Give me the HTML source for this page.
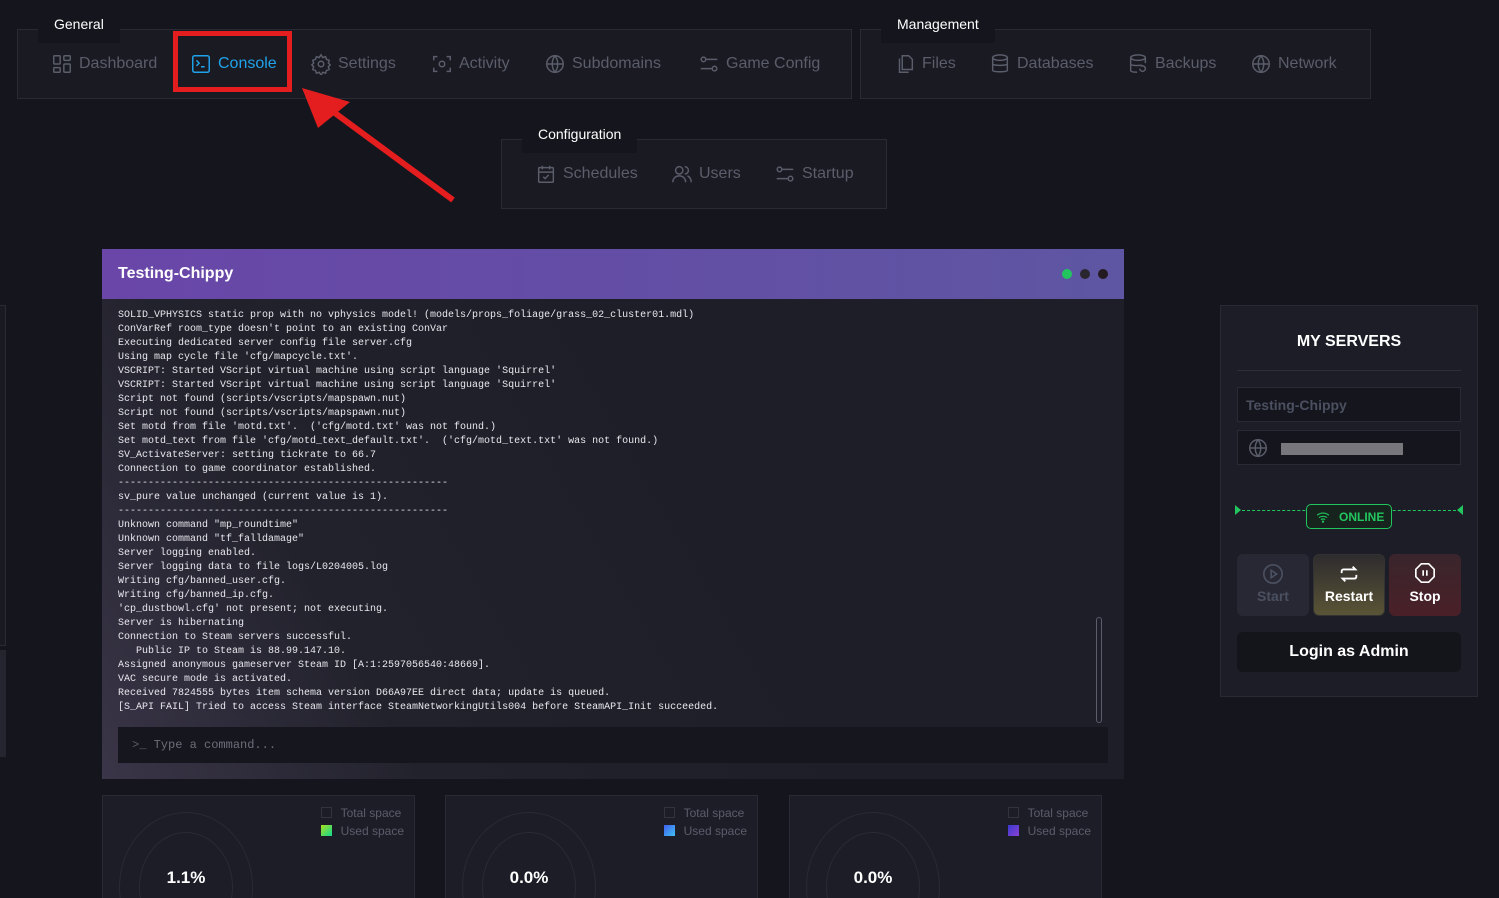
<!DOCTYPE html>
<html style="overflow:hidden;width:1499px;height:898px"><head><meta charset="utf-8"><style>
*{box-sizing:border-box;margin:0;padding:0}
body{width:1499px;height:898px;overflow:hidden;background:#15151d;font-family:"Liberation Sans",sans-serif;position:relative;color:#fff}
.grp{position:absolute;border:1px solid #2a2a35;background:#1a1a23}
.lbl{position:absolute;background:#15151d;color:#fff;font-size:14px;padding:0 16px;height:30px;line-height:22px}
.it{position:absolute;top:0;height:100%;display:flex;align-items:center;color:#5a5d6a;font-size:16px;gap:6px}
.it svg{width:22px;height:22px;fill:none;stroke:#5a5d6a;stroke-width:1.6}
.con{position:absolute;left:102px;top:249px;width:1022px;height:530px}
.hdr{height:50px;background:linear-gradient(90deg,#6946a8,#5e56a2);font-weight:bold;font-size:16px;padding:16px 16px}
.body{height:480px;background:linear-gradient(60deg,#3a3548 0%,#22222c 25%,#1e1e28 60%);position:relative}
pre{position:absolute;left:16px;top:10px;font-family:"Liberation Mono",monospace;font-size:10px;line-height:14px;color:#e8e8ee}
.card{position:absolute;top:795px;width:313px;height:103px;border:1px solid #2a2a35;border-bottom:none;background:#1d1d27;overflow:hidden}
.card .c1{position:absolute;left:16px;top:16px;width:134px;height:150px;border:1px solid #2a2a35;border-radius:50%}
.card .c2{position:absolute;left:36px;top:36px;width:94px;height:110px;border:1px solid #2a2a35;border-radius:50%}
.card .pct{position:absolute;left:16px;width:134px;top:72px;text-align:center;font-weight:bold;font-size:17px}
.leg{position:absolute;right:10px;top:8px;font-size:12px;color:#5a5d6a;line-height:18px}
.leg span{display:inline-block;width:11px;height:11px;border:1px solid #333340;vertical-align:-1px;margin-right:9px}
</style></head><body>

<div class="grp" style="left:17px;top:29px;width:835px;height:70px">
 <div class="it" style="left:33px"><svg viewBox="0 0 24 24"><rect x="3" y="3" width="7" height="9" rx="1"/><rect x="14" y="3" width="7" height="5" rx="1"/><rect x="14" y="12" width="7" height="9" rx="1"/><rect x="3" y="16" width="7" height="5" rx="1"/></svg>Dashboard</div>
 <div class="it" style="left:172px;color:#1fa3ea"><svg viewBox="0 0 24 24" style="stroke:#1fa3ea"><rect x="3" y="3" width="18" height="18" rx="2"/><path d="M7 8l3 3-3 3M12 15h4"/></svg>Console</div>
 <div class="it" style="left:292px"><svg viewBox="0 0 24 24"><circle cx="12" cy="12" r="3"/><path d="M12 2l2 3 3-1 1 3 3 1-1 3 2 2-2 2 1 3-3 1-1 3-3-1-2 3-2-3-3 1-1-3-3-1 1-3-2-2 2-2-1-3 3-1 1-3 3 1z"/></svg>Settings</div>
 <div class="it" style="left:413px"><svg viewBox="0 0 24 24"><path d="M3 8V4h4M17 4h4v4M21 16v4h-4M7 20H3v-4"/><circle cx="12" cy="12" r="3"/></svg>Activity</div>
 <div class="it" style="left:526px"><svg viewBox="0 0 24 24"><circle cx="12" cy="12" r="9"/><path d="M3 12h18M12 3c-4 5-4 13 0 18M12 3c4 5 4 13 0 18"/></svg>Subdomains</div>
 <div class="it" style="left:680px"><svg viewBox="0 0 24 24"><circle cx="6" cy="7" r="2.5"/><path d="M9 7h12M3 17h12"/><circle cx="18" cy="17" r="2.5"/></svg>Game Config</div>
</div>
<div class="lbl" style="left:38px;top:13px">General</div>
<div style="position:absolute;left:173px;top:31px;width:119px;height:61px;border:5px solid #e41e1e"></div>
<svg style="position:absolute;left:290px;top:80px" width="180" height="130"><path d="M163 120L30 22" stroke="#e41e1e" stroke-width="6"/><path d="M12 8L60 22 28 48z" fill="#e41e1e"/></svg>

<div class="grp" style="left:860px;top:29px;width:511px;height:70px">
 <div class="it" style="left:33px"><svg viewBox="0 0 24 24"><path d="M9 3h7l4 4v11H9z"/><path d="M6 6v15h10"/></svg>Files</div>
 <div class="it" style="left:128px"><svg viewBox="0 0 24 24"><ellipse cx="12" cy="5" rx="8" ry="3"/><path d="M4 5v14c0 2 16 2 16 0V5M4 12c0 2 16 2 16 0"/></svg>Databases</div>
 <div class="it" style="left:266px"><svg viewBox="0 0 24 24"><ellipse cx="12" cy="5" rx="8" ry="3"/><path d="M4 5v14c0 2 6 2 7 2M20 5v6M4 12c0 2 10 2 12 1"/><path d="M14 17a3 3 0 1 0 3-3h-2"/></svg>Backups</div>
 <div class="it" style="left:389px"><svg viewBox="0 0 24 24"><circle cx="12" cy="12" r="9"/><path d="M3 12h18M12 3c-4 5-4 13 0 18M12 3c4 5 4 13 0 18"/></svg>Network</div>
</div>
<div class="lbl" style="left:881px;top:13px">Management</div>

<div class="grp" style="left:501px;top:139px;width:386px;height:70px">
 <div class="it" style="left:33px"><svg viewBox="0 0 24 24"><rect x="4" y="5" width="16" height="16" rx="1"/><path d="M4 10h16M8 3v4M16 3v4M9 15l2 2 4-4"/></svg>Schedules</div>
 <div class="it" style="left:169px"><svg viewBox="0 0 24 24"><circle cx="9" cy="8" r="4"/><path d="M2 21c0-4 3-7 7-7s7 3 7 7M15 4a4 4 0 0 1 0 8M18 14c2 1 4 3 4 7"/></svg>Users</div>
 <div class="it" style="left:272px"><svg viewBox="0 0 24 24"><circle cx="6" cy="7" r="2.5"/><path d="M9 7h12M3 17h12"/><circle cx="18" cy="17" r="2.5"/></svg>Startup</div>
</div>
<div class="lbl" style="left:522px;top:123px">Configuration</div>

<div style="position:absolute;left:0;top:305px;width:6px;height:341px;border:1px solid #2a2a35;border-left:none;background:#1a1a23"></div>
<div style="position:absolute;left:0;top:650px;width:6px;height:107px;background:#25252f"></div>

<div class="con">
 <div class="hdr">Testing-Chippy
  <div style="position:absolute;right:16px;top:20px;display:flex;gap:8px"><i style="width:10px;height:10px;border-radius:50%;background:#22c55e"></i><i style="width:10px;height:10px;border-radius:50%;background:#2a2630"></i><i style="width:10px;height:10px;border-radius:50%;background:#241a22"></i></div>
 </div>
 <div class="body">
<pre>SOLID_VPHYSICS static prop with no vphysics model! (models/props_foliage/grass_02_cluster01.mdl)
ConVarRef room_type doesn't point to an existing ConVar
Executing dedicated server config file server.cfg
Using map cycle file 'cfg/mapcycle.txt'.
VSCRIPT: Started VScript virtual machine using script language 'Squirrel'
VSCRIPT: Started VScript virtual machine using script language 'Squirrel'
Script not found (scripts/vscripts/mapspawn.nut)
Script not found (scripts/vscripts/mapspawn.nut)
Set motd from file 'motd.txt'.  ('cfg/motd.txt' was not found.)
Set motd_text from file 'cfg/motd_text_default.txt'.  ('cfg/motd_text.txt' was not found.)
SV_ActivateServer: setting tickrate to 66.7
Connection to game coordinator established.
-------------------------------------------------------
sv_pure value unchanged (current value is 1).
-------------------------------------------------------
Unknown command "mp_roundtime"
Unknown command "tf_falldamage"
Server logging enabled.
Server logging data to file logs/L0204005.log
Writing cfg/banned_user.cfg.
Writing cfg/banned_ip.cfg.
'cp_dustbowl.cfg' not present; not executing.
Server is hibernating
Connection to Steam servers successful.
   Public IP to Steam is 88.99.147.10.
Assigned anonymous gameserver Steam ID [A:1:2597056540:48669].
VAC secure mode is activated.
Received 7824555 bytes item schema version D66A97EE direct data; update is queued.
[S_API FAIL] Tried to access Steam interface SteamNetworkingUtils004 before SteamAPI_Init succeeded.</pre>
  <div style="position:absolute;left:994px;top:318px;width:6px;height:106px;border:1px solid #5a5d6a;border-radius:3px"></div>
  <div style="position:absolute;left:16px;top:428px;width:990px;height:36px;background:#16161e;font-family:'Liberation Mono',monospace;font-size:12px;color:#6b6e7a;padding:11px 14px"><span style="color:#5a5d6a">&gt;_</span> Type a command...</div>
 </div>
</div>

<div style="position:absolute;left:1220px;top:305px;width:258px;height:392px;border:1px solid #2a2a35;background:#1d1d27">
 <div style="text-align:center;font-weight:bold;font-size:16px;margin-top:27px">MY SERVERS</div>
 <div style="position:absolute;left:16px;top:64px;width:224px;border-top:1px solid #2e2e3a"></div>
 <div style="position:absolute;left:16px;top:81px;width:224px;height:35px;border:1px solid #2a2a35;background:#15151d;color:#4b5060;font-weight:bold;font-size:14px;padding:9px 8px">Testing-Chippy</div>
 <div style="position:absolute;left:16px;top:124px;width:224px;height:35px;border:1px solid #2a2a35;background:#15151d">
  <svg style="position:absolute;left:9px;top:6px" width="22" height="22" viewBox="0 0 24 24" fill="none" stroke="#5a5d6a" stroke-width="1.6"><circle cx="12" cy="12" r="9"/><path d="M3 12h18M12 3c-4 5-4 13 0 18M12 3c4 5 4 13 0 18"/></svg>
  <div style="position:absolute;left:43px;top:12px;width:122px;height:12px;background:#77777c"></div></div>
 <div style="position:absolute;left:16px;top:204px;width:224px;border-top:1px dashed #22c55e"></div>
 <div style="position:absolute;left:14px;top:199px;width:0;height:0;border-top:5px solid transparent;border-bottom:5px solid transparent;border-left:6px solid #22c55e"></div>
 <div style="position:absolute;left:236px;top:199px;width:0;height:0;border-top:5px solid transparent;border-bottom:5px solid transparent;border-right:6px solid #22c55e"></div>
 <div style="position:absolute;left:85px;top:198px;width:86px;height:25px;border:1px solid #22c55e;border-radius:5px;background:#17241e;color:#22c55e;font-weight:bold;font-size:12px;padding:5px 0 0 32px">ONLINE
  <svg style="position:absolute;left:9px;top:5px" width="14" height="14" viewBox="0 0 24 24" fill="none" stroke="#22c55e" stroke-width="2"><path d="M2 9c6-5 14-5 20 0M5 13c4-3 10-3 14 0M8.5 16.5c2-1.5 5-1.5 7 0"/><circle cx="12" cy="20" r="1"/></svg></div>
 <div style="position:absolute;left:16px;top:248px;width:72px;height:62px;border-radius:6px;background:#282834;color:#4b5060;font-weight:bold;font-size:14px;text-align:center;padding-top:34px">Start
  <svg style="position:absolute;left:25px;top:9px" width="22" height="22" viewBox="0 0 24 24" fill="none" stroke="#4b5060" stroke-width="1.8"><circle cx="12" cy="12" r="10"/><path d="M10 8l6 4-6 4z"/></svg></div>
 <div style="position:absolute;left:92px;top:248px;width:72px;height:62px;border-radius:6px;background:linear-gradient(#2e2c2e,#5a5436);border:1px solid #333;font-weight:bold;font-size:14px;text-align:center;padding-top:33px">Restart
  <svg style="position:absolute;left:24px;top:8px" width="22" height="22" viewBox="0 0 24 24" fill="none" stroke="#fff" stroke-width="2"><path d="M4 11V9a2 2 0 0 1 2-2h13l-3-3M20 13v2a2 2 0 0 1-2 2H5l3 3"/></svg></div>
 <div style="position:absolute;left:168px;top:248px;width:72px;height:62px;border-radius:6px;background:linear-gradient(#3a252c,#4a2028);font-weight:bold;font-size:14px;text-align:center;padding-top:34px">Stop
  <svg style="position:absolute;left:25px;top:8px" width="22" height="22" viewBox="0 0 24 24" fill="none" stroke="#fff" stroke-width="1.8"><path d="M8 2h8l6 6v8l-6 6H8l-6-6V8z"/><path d="M10 9v6M14 9v6"/></svg></div>
 <div style="position:absolute;left:16px;top:326px;width:224px;height:40px;border-radius:6px;background:#14141b;font-weight:bold;font-size:16px;text-align:center;line-height:40px">Login as Admin</div>
</div>

<div class="card" style="left:102px"><div class="c1"></div><div class="c2"></div><div class="pct">1.1%</div>
 <div class="leg"><span></span>Total space<br><span style="background:linear-gradient(135deg,#a8e020,#10d890);border:none"></span>Used space</div></div>
<div class="card" style="left:445px"><div class="c1"></div><div class="c2"></div><div class="pct">0.0%</div>
 <div class="leg"><span></span>Total space<br><span style="background:linear-gradient(135deg,#4060f0,#40c0f0);border:none"></span>Used space</div></div>
<div class="card" style="left:789px"><div class="c1"></div><div class="c2"></div><div class="pct">0.0%</div>
 <div class="leg"><span></span>Total space<br><span style="background:linear-gradient(135deg,#3a3ad0,#8a40d0);border:none"></span>Used space</div></div>
</body></html>
